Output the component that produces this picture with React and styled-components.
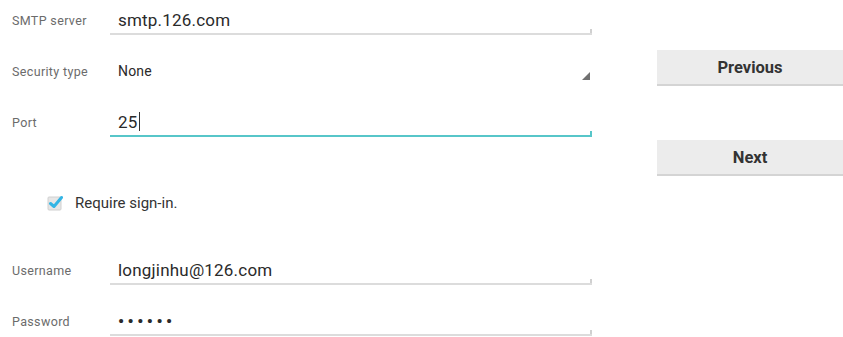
import React from 'react'
import styled, { createGlobalStyle } from 'styled-components'

const GlobalStyle = createGlobalStyle`
  html, body {
    margin: 0;
    padding: 0;
    background: #fff;
    font-family: Roboto, "Liberation Sans", Arial, sans-serif;
  }
`;

const Screen = styled.div`
  display: flex;
  width: 843px;
  height: 337px;
  overflow: hidden;
  background: #fff;
`;

const Form = styled.div`
  width: 580px;
  padding-left: 12px;
  display: flex;
  flex-direction: column;
`;

const Row = styled.div`
  display: flex;
  flex-shrink: 0;
  height: 51px;
  margin-top: ${p => p.$gap || 0}px;
`;

const Label = styled.div`
  width: 98px;
  flex-shrink: 0;
  line-height: 42px;
  font-size: 12.5px;
  color: #6b6b6b;
  letter-spacing: 0.35px;
`;

const Field = styled.div`
  position: relative;
  flex: 1;
  height: 27px;
  margin-top: 6px;
  padding-left: 8px;
  display: flex;
  align-items: center;
  justify-content: space-between;
  border-bottom: 2px solid ${p => (p.$focused ? '#57c6c9' : p.$plain ? 'transparent' : '#dcdcdc')};
  font-size: ${p => (p.$small ? 14 : 17)}px;
  color: #2a2a2a;

  &::after {
    content: '';
    position: absolute;
    right: 0;
    bottom: 0;
    width: 2px;
    height: ${p => (p.$plain ? 0 : 4)}px;
    background: ${p => (p.$focused ? '#57c6c9' : '#d0d0d0')};
  }
`;

const Value = styled.span`
  display: flex;
  align-items: center;
  letter-spacing: ${p => (p.$dots ? '3.5px' : '0.2px')};
  font-weight: ${p => (p.$dots ? 'bold' : 'normal')};
`;

const Caret = styled.span`
  display: inline-block;
  width: 1.5px;
  height: 19px;
  margin-left: 1px;
  background: #333;
`;

const SpinnerMark = styled.svg`
  width: 8px;
  height: 8px;
  margin-right: 2px;
  align-self: flex-end;
  margin-bottom: 4px;
`;

const CheckRow = styled.label`
  display: flex;
  flex-shrink: 0;
  align-items: center;
  gap: 12px;
  height: 40px;
  margin-top: 30px;
  padding-left: 35px;
  font-size: 15px;
  color: #333;
`;

const Buttons = styled.div`
  flex: 1;
  margin-left: 65px;
  padding-top: 50px;
  display: flex;
  flex-direction: column;
  gap: 54px;
`;

const Button = styled.button`
  height: 36px;
  border: none;
  border-bottom: 2px solid #d4d4d4;
  background: #ececec;
  font-family: Roboto, "Liberation Sans", Arial, sans-serif;
  font-size: 16.5px;
  font-weight: bold;
  color: #333;
  padding: 0;
`;

function CheckIcon() {
  return (
    <svg width="16" height="16" viewBox="0 0 16 16">
      <rect x="1" y="2" width="13" height="13" rx="1" fill="#e6e6e6" stroke="#d0d0d0" />
      <path d="M3.5 8.5 L7 11.5 L14.5 2.5" fill="none" stroke="#33b5e5" strokeWidth="3" strokeLinecap="round" strokeLinejoin="round" />
    </svg>
  );
}

export default function App() {
  return (
    <>
      <GlobalStyle />
      <Screen>
        <Form>
          <Row>
            <Label>SMTP server</Label>
            <Field><Value>smtp.126.com</Value></Field>
          </Row>
          <Row>
            <Label>Security type</Label>
            <Field $plain $small>
              <Value>None</Value>
              <SpinnerMark viewBox="0 0 8 8">
                <polygon points="8,0 8,8 0,8" fill="#707070" />
              </SpinnerMark>
            </Field>
          </Row>
          <Row>
            <Label>Port</Label>
            <Field $focused><Value>25<Caret /></Value></Field>
          </Row>
          <CheckRow>
            <CheckIcon />
            Require sign-in.
          </CheckRow>
          <Row $gap={27}>
            <Label>Username</Label>
            <Field><Value>longjinhu@126.com</Value></Field>
          </Row>
          <Row>
            <Label>Password</Label>
            <Field><Value $dots>••••••</Value></Field>
          </Row>
        </Form>
        <Buttons>
          <Button>Previous</Button>
          <Button>Next</Button>
        </Buttons>
      </Screen>
    </>
  );
}
